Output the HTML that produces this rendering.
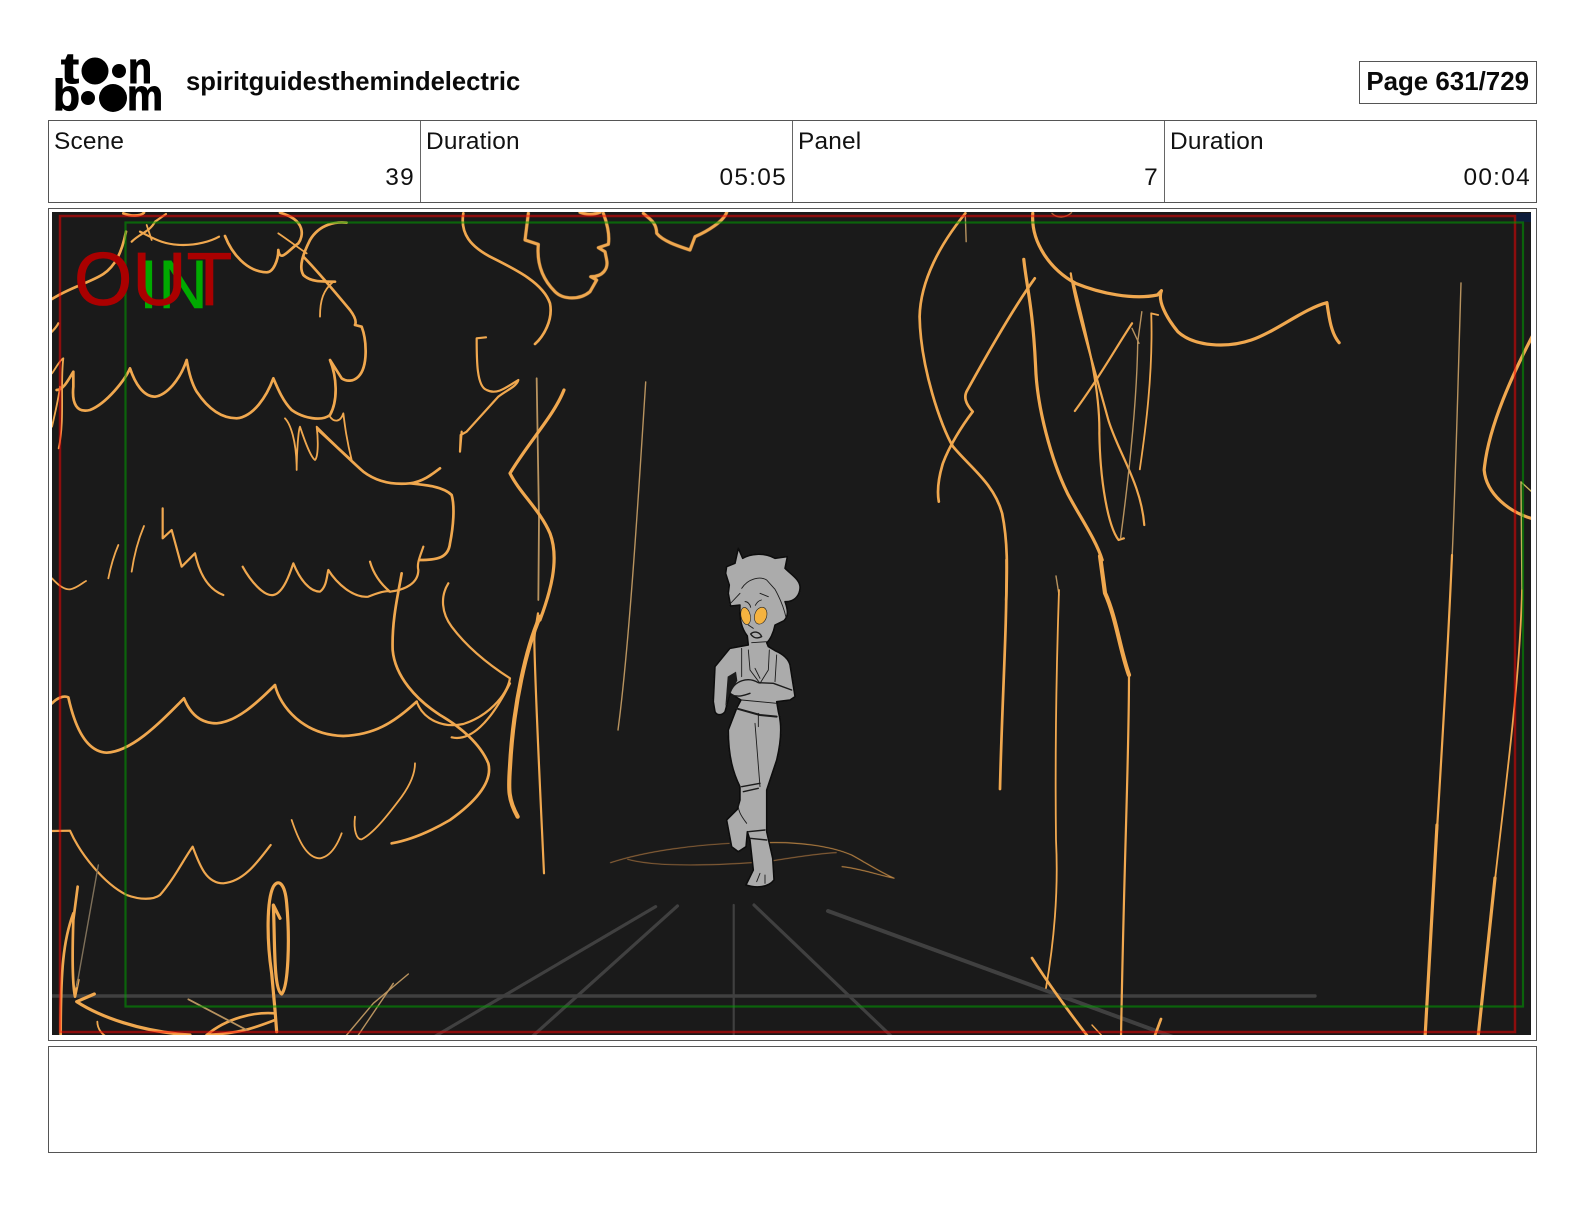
<!DOCTYPE html>
<html lang="en">
<head>
<meta charset="utf-8">
<title>spiritguidesthemindelectric - Page 631/729</title>
<style>
html,body{margin:0;padding:0;background:#fff}
body{width:1584px;height:1224px;position:relative;overflow:hidden;font-family:"Liberation Sans",sans-serif;color:#111}
.abs{position:absolute;box-sizing:border-box}
.title{left:186px;top:67px;font-size:25.6px;line-height:30px;font-weight:700;white-space:nowrap;color:#0a0a0a}
.pg{left:1359px;top:61px;width:178px;height:43px;border:1px solid #555;font-size:25.9px;font-weight:700;line-height:41px;text-align:right;padding-right:7px;white-space:nowrap;color:#0a0a0a}
.tbl{left:48px;top:120px;width:1489px;height:83px;border:1px solid #555}
.cell{top:0;height:81px;border-right:1px solid #666}
.lab{position:absolute;left:5px;top:6px;font-size:24.4px;line-height:30px;letter-spacing:.2px}
.val{position:absolute;right:5px;top:42px;font-size:24.4px;line-height:30px;letter-spacing:1.3px}
.frame{left:48px;top:208px;width:1489px;height:833px;border:1px solid #555}
.note{left:48px;top:1046px;width:1489px;height:107px;border:1px solid #555}
svg.art{position:absolute;left:0;top:0}
.o{fill:none;stroke:#f0a850;stroke-linecap:round;stroke-linejoin:round;vector-effect:non-scaling-stroke}
.a{stroke-width:1.4}.b{stroke-width:1.8}.c{stroke-width:2.2}.d{stroke-width:2.7}.e{stroke-width:3.2}.f{stroke-width:4.2}
.t{stroke:#b8935f}
.g{fill:none;stroke:#3f3f3f;stroke-linecap:round;vector-effect:non-scaling-stroke}
.br{fill:none;stroke:#8c6238;stroke-linecap:round;stroke-width:1.1;vector-effect:non-scaling-stroke}
.k{fill:none;stroke:#1a1a1a;stroke-linecap:round;stroke-linejoin:round;vector-effect:non-scaling-stroke;stroke-width:.9}
</style>
</head>
<body>
<svg class="abs" style="left:0;top:0" width="200" height="120" viewBox="0 0 200 120">
  <g fill="#000" font-family="Liberation Sans, sans-serif" font-weight="700" stroke="#000" stroke-width="1">
    <text x="61" y="83" font-size="44" textLength="18" lengthAdjust="spacingAndGlyphs">t</text>
    <text x="128" y="83" font-size="44" textLength="24" lengthAdjust="spacingAndGlyphs">n</text>
    <text x="53" y="110" font-size="44" textLength="27" lengthAdjust="spacingAndGlyphs">b</text>
    <text x="127" y="110" font-size="44" textLength="36" lengthAdjust="spacingAndGlyphs">m</text>
  </g>
  <circle cx="95" cy="71" r="13.500" fill="#000"/>
  <circle cx="119" cy="71" r="7" fill="#000"/>
  <circle cx="88" cy="98" r="7" fill="#000"/>
  <circle cx="113" cy="98" r="14" fill="#000"/>
</svg>
<div class="abs title">spiritguidesthemindelectric</div>
<div class="abs pg">Page 631/729</div>

<div class="abs tbl">
  <div class="abs cell" style="left:0;width:372px"><span class="lab">Scene</span><span class="val">39</span></div>
  <div class="abs cell" style="left:372px;width:372px"><span class="lab">Duration</span><span class="val">05:05</span></div>
  <div class="abs cell" style="left:744px;width:372px"><span class="lab">Panel</span><span class="val">7</span></div>
  <div class="abs cell" style="left:1116px;width:371px;border-right:0"><span class="lab">Duration</span><span class="val">00:04</span></div>
</div>

<div class="abs frame"></div>
<div class="abs note"></div>

<svg class="art" width="1584" height="1224" viewBox="0 0 1584 1224">
  <defs>
    <clipPath id="cv"><rect x="52" y="212" width="1479" height="823"/></clipPath>
    <filter id="soft" x="0" y="0" width="100%" height="100%"><feGaussianBlur stdDeviation="0.35"/></filter>
  </defs>
  <rect x="52" y="212" width="1479" height="823" fill="#1a1a1a"/>
  <g clip-path="url(#cv)">
  <g filter="url(#soft)">
    <rect x="1516" y="213" width="15" height="9" fill="#101a3a"/>

    <!-- ground shadow lines -->
    <g transform="translate(400,820) scale(.3827,.3333)">
      <path class="g" stroke-width="3.2" d="M668 260L90 650"/>
      <path class="g" stroke-width="3.2" d="M725 258L345 650"/>
      <path class="g" stroke-width="2.2" d="M872 255V650"/>
      <path class="g" stroke-width="3.2" d="M925 255L1285 650"/>
    </g>
    <path class="g" stroke-width="4" d="M828 911L1173 1037"/>
    <path class="g" stroke-width="3.4" stroke="#444" d="M52 996H1315"/>

    <!-- left tree, upper (zoom 3 coords) -->
    <g transform="translate(40,200) scale(.33333)">
      <path class="o d" d="M36 297C90 262 150 248 190 222C225 198 245 160 258 95"/>
      <path class="o c" d="M275 125C300 100 330 95 345 65L378 42"/>
      <path class="o c" d="M300 95C340 115 370 135 430 135C470 135 510 125 537 110"/>
      <path class="o b" d="M320 75L335 120"/>
      <path class="o d" d="M250 40C270 48 300 50 312 38"/>
      <path class="o d" d="M555 108C575 160 620 215 680 217C700 217 715 180 715 150C720 190 745 150 775 130C790 110 800 60 720 38"/>
      <path class="o b" d="M715 100C745 120 770 140 800 160"/>
      <path class="o d" d="M920 68C890 65 840 70 810 120C790 160 775 200 790 225C810 245 840 245 885 245"/>
      <path class="o d" d="M790 170C830 210 880 270 930 330C945 350 950 365 945 375L965 380C980 420 985 500 955 530C940 545 920 545 905 535L870 480C890 530 895 600 870 645C845 665 790 655 755 630C730 605 715 570 700 535C680 590 640 650 590 655C540 655 500 620 470 575C455 550 445 510 440 480C420 540 380 585 345 590C310 590 285 550 270 505C255 540 200 610 150 630C110 640 95 610 100 560L100 515C85 540 70 570 50 570"/>
      <path class="o b" d="M880 245C850 270 840 300 840 350"/>
      <path class="o c" d="M36 395C45 385 50 380 55 370"/>
      <path class="o b" d="M36 520C50 500 60 480 70 475C60 550 75 660 56 745"/>
      <path class="o b" d="M36 680C45 640 55 600 60 560"/>
      <path class="o b" d="M735 655C750 670 770 720 770 810C770 760 775 690 780 680C790 710 810 770 825 780C835 770 835 720 830 680C860 710 900 750 935 780C920 720 915 680 910 640C900 670 880 665 870 650"/>
      <path class="o d" d="M835 690C880 730 930 780 970 815C1010 845 1060 855 1110 850C1150 845 1180 820 1200 805"/>
      <path class="o d" d="M1110 850C1160 855 1210 860 1235 885C1245 920 1240 980 1230 1030C1225 1075 1190 1080 1140 1080"/>
      <path class="o c" d="M1150 1040C1140 1070 1130 1090 1135 1110C1135 1150 1095 1170 1050 1175C1020 1150 1000 1120 990 1085"/>
      <path class="o c" d="M608 1100C630 1140 670 1190 700 1185C730 1180 750 1120 760 1090C780 1140 810 1175 840 1175C860 1160 860 1130 865 1110C890 1150 940 1195 985 1190C1010 1180 1040 1170 1050 1175"/>
      <path class="o c" d="M368 925V1015L395 990L425 1100L465 1060C480 1130 510 1170 550 1185"/>
      <path class="o b" d="M312 978C290 1030 280 1080 275 1115"/>
      <path class="o b" d="M235 1035C220 1070 210 1110 205 1135"/>
      <path class="o b" d="M36 1135C50 1150 70 1170 90 1168C110 1165 125 1150 138 1143"/>
      <path class="o c" d="M1338 412L1310 415C1310 480 1310 560 1340 570C1370 585 1395 565 1435 540C1430 560 1400 570 1375 590L1280 695L1262 705L1260 755L1265 695"/>
      <path class="o b t" d="M1490 535L1497 960L1495 1200"/>
      <path class="o e" d="M1572 570C1540 650 1470 720 1410 820C1440 880 1500 930 1530 1000C1560 1080 1530 1180 1500 1260"/>
      <path class="o d" d="M1270 40C1260 100 1290 140 1360 175C1430 210 1510 250 1530 310C1540 360 1510 410 1485 432"/>
    </g>

    <!-- top middle lobes (zoom 8 coords) -->
    <g transform="translate(440,205) scale(.33333)">
      <path class="o e" d="M265 25L255 105L295 118C290 170 305 220 345 260C370 285 420 285 450 260L470 225L452 215C490 215 505 190 500 165L495 140L475 128L505 118C510 90 500 50 490 25"/>
      <path class="o e" d="M610 25C625 40 650 50 650 85C670 110 720 125 750 135L765 95C800 80 850 50 860 22"/>
      <path class="o e" d="M420 22C440 30 460 30 480 22"/>
    </g>
    <path class="o a t" d="M645.7 382C640 470 630 640 618 730"/>

    <!-- left tree, lower (zoom 4 coords) -->
    <g transform="translate(40,620) scale(.33333)">
      <path class="o f" d="M1500 -10C1460 80 1420 250 1410 440C1405 510 1405 540 1433 590"/>
      <path class="o c" d="M1494 -20C1488 20 1483 40 1483 60C1485 200 1500 500 1512 760"/>
      <path class="o d" d="M1085 -140C1075 -80 1055 0 1058 90C1065 170 1130 240 1200 285C1260 320 1320 370 1345 430C1360 490 1300 550 1230 600C1170 635 1110 660 1055 670"/>
      <path class="o c" d="M1225 -110C1200 -70 1205 -20 1235 20C1280 80 1340 130 1410 175C1400 230 1340 290 1270 312C1210 325 1150 300 1130 245"/>
      <path class="o c" d="M1235 352C1290 365 1350 310 1410 190"/>
      <path class="o d" d="M36 250C50 235 70 225 85 232C100 300 130 395 200 398C270 395 350 320 432 235C450 280 480 310 530 310C590 305 650 250 705 195C720 260 790 345 910 348C1000 345 1060 310 1130 245"/>
      <path class="o c" d="M36 633L90 632C120 700 190 790 260 825C300 840 340 840 360 825C400 780 430 720 458 680C480 740 500 790 550 790C610 785 650 730 692 675"/>
      <path class="o b" d="M755 600C775 660 800 715 840 715C870 710 890 680 905 640"/>
      <path class="o b" d="M945 590C940 630 950 660 965 658C1000 640 1040 590 1085 530C1110 495 1125 460 1125 430"/>
      <path class="o e" d="M720 895L700 855C705 960 700 1110 725 1122C745 1100 750 960 740 850C735 790 715 775 700 800C680 840 680 960 695 1060L705 1170L710 1235"/>
      <path class="o d" d="M113 800L100 900C98 960 95 1080 105 1130L115 1080"/>
      <path class="o d" d="M100 880C70 960 62 1050 62 1245"/>
      <path class="o a t" style="stroke:#7e705a" d="M175 735L110 1100"/>
      <path class="o e" d="M163 1122L110 1145C180 1190 300 1235 450 1245"/>
      <path class="o b" d="M172 1205C172 1230 190 1245 200 1250"/>
      <path class="o d" d="M500 1245C560 1195 640 1175 705 1180"/>
      <path class="o d" d="M705 1200C640 1225 600 1240 500 1245"/>
      <path class="o b t" d="M445 1138L620 1230"/>
      <path class="o a t" d="M1105 1062L1000 1150L920 1245"/>
      <path class="o a t" d="M1060 1090L955 1245"/>
    </g>

    <!-- right trunks (zoom 5 coords) -->
    <g transform="translate(900,200) scale(.4085,.33333)">
      <path class="o d" d="M160 40C100 130 50 240 48 350C50 500 100 680 130 740C170 800 230 850 250 940C265 1030 262 1120 260 1200"/>
      <path class="o d" d="M330 235C280 320 210 470 165 570C155 590 160 610 178 635C150 680 120 740 105 790C95 830 90 870 95 905"/>
      <path class="o e" d="M303 178C310 260 325 320 332 500C335 620 370 780 410 880C440 950 480 1020 495 1080"/>
      <path class="o e" d="M325 40C320 130 370 210 430 250C490 280 570 300 630 285L640 272C630 300 650 350 680 395C720 440 800 445 860 420C920 395 990 325 1045 308C1050 350 1055 400 1075 428"/>
      <path class="o c" d="M418 220C430 320 470 480 510 660C535 760 590 850 598 975"/>
      <path class="o c" d="M425 250C450 380 490 550 488 700C490 850 510 980 535 1020L548 1015"/>
      <path class="o c" d="M568 370C530 440 490 530 428 633"/>
      <path class="o a t" d="M592 335L582 425C580 600 560 830 540 1015"/>
      <path class="o a t" d="M568 385L585 430"/>
      <path class="o b" d="M632 345L615 340C620 520 600 700 587 808"/>
      <path class="o a" style="stroke:#a5683a" d="M372 40C385 55 405 55 420 38"/>
      <path class="o a t" d="M160 50L162 125"/>
      <path class="o e" d="M1560 380C1500 520 1440 680 1430 810C1435 880 1490 940 1560 960"/>
    </g>

    <!-- long lines in page coords -->
    <path class="o a t" d="M1461 283C1458 380 1456 470 1452 560"/>
    <path class="o c" d="M1452 555C1448 650 1443 730 1437 830"/>
    <path class="o e" d="M1437 825C1433 890 1430 960 1425 1038"/>
    <path class="o a" style="stroke:#c9b45a" d="M1521 482L1532 492"/>
    <path class="o a" style="stroke:#c9b45a" d="M1521 482L1522 600"/>
    <path class="o b" d="M1522 590C1520 680 1505 790 1495 880"/>
    <path class="o e" d="M1495 878L1478 1038"/>

    <path class="o d" d="M1006.500 560C1007 630 1002 700 1000 789"/>
    <path class="o a t" d="M1056 576L1059 595"/>
    <path class="o b" d="M1059 590C1056 680 1055 760 1056 840C1058 880 1056 930 1046 988"/>
    <path class="o f" d="M1100 556L1105 593C1116 617 1120 650 1129 675"/>
    <path class="o c" d="M1129 675C1129 760 1124 860 1121 1038"/>
    <path class="o d" d="M1032 958C1048 983 1069 1012 1089 1038"/>
    <path class="o a" d="M1092 1025L1104 1038"/>
    <path class="o d" d="M1161 1019L1154 1038"/>

    <!-- ground ellipse (zoom 9 coords) -->
    <g transform="translate(400,820) scale(.3827,.3333)">
      <path class="br" d="M550 128C650 90 780 75 860 70"/>
      <path class="br" style="stroke:#b98343" d="M955 68C1050 65 1130 80 1180 105C1220 130 1260 160 1292 175C1250 165 1200 145 1155 140"/>
      <path class="br" d="M595 118C650 135 760 140 920 128"/>
      <path class="br" d="M975 122C1040 110 1100 100 1140 98"/>
    </g>

    <!-- figure (zoom 2 coords) -->
    <g transform="translate(660,530) scale(.33333)">
      <path fill="#ababab" stroke="#0c0c0c" stroke-width="1.5" stroke-linejoin="round" vector-effect="non-scaling-stroke" d="M235 55L248 85C270 72 310 66 345 85L382 80L375 115C395 135 422 150 420 175C418 200 400 216 375 215C384 240 386 258 372 272L345 285C340 310 330 330 320 338L325 350L345 362C368 372 385 385 390 405L405 500L390 510L350 515L355 545C368 590 362 640 350 690L320 780L320 905L338 985L342 1050C325 1072 290 1075 258 1065L280 1020L270 930L262 905L258 950L235 965L215 950L200 870L232 838L240 810V770C220 730 205 680 205 600L230 535L243 510L210 490L195 545C185 558 170 556 165 545L160 515L165 410L210 355L265 345L262 318C245 295 238 270 240 225L212 228L205 190L208 165L197 130L200 110L225 100Z"/>
      <path fill="#1a1a1a" d="M203 440L228 425L232 452L212 485L196 530Z"/>
      <g>
        <path class="k" d="M245 175C265 145 300 138 320 150L345 178C360 205 372 235 378 262"/>
        <path class="k" d="M207 225L240 190M300 190L325 200"/>
        <path class="k" d="M255 215C262 214 270 222 272 232M286 226C290 218 296 212 304 210"/>
        <path class="k" d="M265 285L280 295"/>
        <path class="k" style="stroke-width:1.4" d="M272 312C282 303 298 304 305 320C292 327 280 324 272 312Z"/>
        <path class="k" d="M275 338L320 335"/>
        <path class="k" d="M245 355V440M350 375L345 455"/>
        <path class="k" d="M265 360L270 420L300 460L325 420L328 360M285 415L300 445"/>
        <path class="k" style="stroke-width:1.4" d="M210 490C222 450 265 440 295 458L340 460L395 480M215 495C235 502 250 497 270 490"/>
        <path class="k" d="M245 510L350 520"/>
        <path class="k" style="stroke-width:2" d="M228 535L300 555L350 560"/>
        <path class="k" d="M295 550V590M285 580L300 770"/>
        <path class="k" style="stroke-width:1.4" d="M245 770L300 760M250 785L295 775"/>
        <path class="k" style="stroke-width:1.4" d="M265 905L315 900M270 925L320 930"/>
        <path class="k" d="M235 810C230 840 245 860 260 880"/>
        <path class="k" d="M290 1055L300 1030M315 1060L315 1035"/>
      </g>
      <ellipse cx="257" cy="258" rx="14" ry="26" fill="#f5b33f" stroke="#222" stroke-width=".6" vector-effect="non-scaling-stroke" transform="rotate(-12 257 258)"/>
      <ellipse cx="302" cy="257" rx="18" ry="26" fill="#f5b33f" stroke="#222" stroke-width=".6" vector-effect="non-scaling-stroke" transform="rotate(18 302 257)"/>
    </g>

    <!-- safe-area frames -->
    <rect x="60" y="216" width="1455" height="816" fill="none" stroke="#ff0000" stroke-opacity=".5" stroke-width="2.500"/>
    <rect x="125.500" y="222.500" width="1397.500" height="784" fill="none" stroke="#00a000" stroke-opacity=".55" stroke-width="2.200"/>
  </g>
    <text x="139" y="308" font-family="Liberation Sans, sans-serif" font-size="69" fill="#00aa00" stroke="#00aa00" stroke-width=".6">IN</text>
    <text x="74" y="305" font-family="Liberation Sans, sans-serif" font-size="75" fill="#aa0000" stroke="#aa0000" stroke-width=".8">OUT</text>
  </g>
</svg>
</body>
</html>
